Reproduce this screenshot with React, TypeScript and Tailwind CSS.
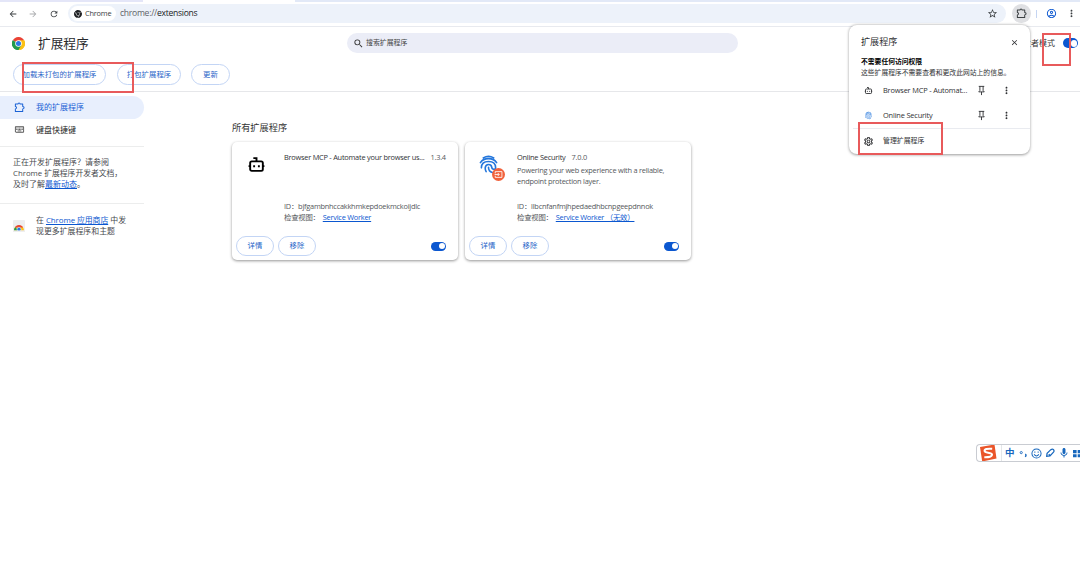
import type { ReactNode } from "react";
import {
  MdArrowBack,
  MdArrowForward,
  MdClose,
  MdFingerprint,
  MdMic,
  MdMoreVert,
  MdOutlineAccountCircle,
  MdOutlineKeyboard,
  MdOutlineSettings,
  MdRefresh,
  MdSearch,
  MdStarBorder,
} from "react-icons/md";
import { SiGooglechrome } from "react-icons/si";

interface Extension {
  name: string;
  version: string;
  description?: string;
  id: string;
  worker: string;
  icon: ReactNode;
}

const BotIcon = ({ className }: { className?: string }) => (
  <svg viewBox="0 0 24 24" fill="none" stroke="currentColor" strokeWidth="2.4" className={className}>
    <path d="M12 8V4H8M2 14h2M20 14h2M15 13v2.6M9 13v2.6" />
    <rect x="4" y="8" width="16" height="12" rx="2" />
  </svg>
);

// body with a tab on top and on the right, notch on the left
const PuzzleIcon = ({ className }: { className?: string }) => (
  <svg viewBox="0 0 24 24" fill="none" stroke="currentColor" strokeWidth="2.2" strokeLinejoin="round" className={className}>
    <path d="M3 4.500h5.500Q9 2 11 2t2.500 2.500H19V10q3 .5 3 2.500T19 15v5.500H3V15q2.500-.5 2.500-2.500T3 10z" />
  </svg>
);

const PinIcon = ({ className }: { className?: string }) => (
  <svg viewBox="0 0 24 24" fill="none" stroke="currentColor" strokeWidth="2" className={className}>
    <path d="M6 3h12M8.5 3v9L6 15h12l-2.5-3V3M12 15v7" />
  </svg>
);

const ChromeLogo = ({ className }: { className?: string }) => (
  <svg viewBox="0 0 48 48" className={className}>
    <path d="M24 24 3.2 12A24 24 0 0 1 44.8 12Z" fill="#ea4335" />
    <path d="M24 24 44.8 12A24 24 0 0 1 24 48Z" fill="#fbc116" />
    <path d="M24 24v24A24 24 0 0 1 3.2 12Z" fill="#229a4c" />
    <path d="M24 12h20.8A24 24 0 0 1 24 48l10.4-18z" fill="#fbc116" />
    <path d="M13.6 30 3.2 12A24 24 0 0 0 24 48l10.4-18z" fill="#229a4c" />
    <circle cx="24" cy="24" r="12" fill="#fff" />
    <circle cx="24" cy="24" r="9.3" fill="#2b77e5" />
  </svg>
);

const StoreIcon = () => (
  <svg viewBox="0 0 12 12" className="h-3 w-3 shrink-0">
    <rect width="12" height="12" rx="1" fill="#eeeeef" />
    <path d="M1 10.500a5 5 0 0 1 10 0z" fill="#fbc116" />
    <path d="M1 10.500a5 5 0 0 1 1.300-3.500L5 10.500z" fill="#229a4c" />
    <path d="M1.700 7.500a5 5 0 0 1 8.600 0z" fill="#ea4335" />
    <circle cx="6" cy="9.300" r="2" fill="#2b77e5" stroke="#fff" strokeWidth=".5" />
    <path d="M0 10.500h12V12H0z" fill="#eeeeef" />
  </svg>
);

const FingerprintIcon = ({ className }: { className?: string }) => (
  <svg viewBox="0 0 20 20" fill="none" stroke="currentColor" strokeWidth="1.7" strokeLinecap="round" className={className}>
    <path d="M4.5 3Q10-.2 15.5 3M1.5 8Q4 3.8 10 3.8T18.5 8M2.5 13.5Q2.5 6.9 10 6.9T17.5 13.5q-.3 2-2.5 1.5-1.6-.5-1.7-2.5Q13 10 10 10T6.5 13.5q0 2.5 1 4M10 13q0 4.5 4 5.5" />
  </svg>
);

const SecurityIcon = () => (
  <div className="relative h-[26px] w-[25px]">
    <FingerprintIcon className="-ml-px h-[19px] w-[19px] text-[#2376dc]" />
    <svg viewBox="0 0 14 14" className="absolute right-0 bottom-0 h-[13px] w-[13px]">
      <circle cx="7" cy="7" r="7" fill="#f1623c" />
      <path d="M3.5 5.8V3.9h7.2v6.2H3.5V8.3M2.8 7h4.7M6.2 5.4 7.8 7 6.2 8.6" fill="none" stroke="#fff" strokeWidth=".9" />
    </svg>
  </div>
);

const extensions: Extension[] = [
  {
    name: "Browser MCP - Automate your browser us...",
    version: "1.3.4",
    id: "bjfgambnhccakkhmkepdoekmckoijdlc",
    worker: "Service Worker",
    icon: <BotIcon className="h-[19px] w-[19px] text-black" />,
  },
  {
    name: "Online Security",
    version: "7.0.0",
    description: "Powering your web experience with a reliable, endpoint protection layer.",
    id: "llbcnfanfmjhpedaedhbcnpgeepdnnok",
    worker: "Service Worker （无效）",
    icon: <SecurityIcon />,
  },
];

function Toggle() {
  return (
    <span className="flex h-[9px] w-[15px] items-center justify-end rounded-full bg-[#0b57d0] pr-[1.5px]">
      <span className="h-1.5 w-1.5 rounded-full bg-white" />
    </span>
  );
}

function PillButton({ children, className }: { children: ReactNode; className: string }) {
  return (
    <button className={`flex shrink-0 items-center justify-center rounded-full border border-[#c3d5f5] whitespace-nowrap text-[#2a66c9] ${className}`}>
      {children}
    </button>
  );
}

function BrowserBar() {
  return (
    <div className="h-[27px] border-b border-[#e8eaef] bg-white">
      <div className="flex h-[2px]">
        <div className="w-[143px] bg-[#e4e6f8]" />
        <div className="w-[152px] bg-white" />
        <div className="flex-1 bg-[#e2e9f7]" />
      </div>
      <div className="flex h-[23px] items-center pl-2 text-[#3c4043]">
        <MdArrowBack className="h-2.5 w-2.5" />
        <MdArrowForward className="ml-2.5 h-2.5 w-2.5 text-[#a9abae]" />
        <MdRefresh className="ml-[11px] h-2.5 w-2.5" />
        <div className="ml-[9px] flex h-[19px] w-[938px] items-center rounded-full bg-[#edf2fa] pl-0.5">
          <div className="flex h-[15px] w-[46px] items-center gap-[3px] rounded-full bg-white pl-1">
            <SiGooglechrome className="h-2 w-2 text-[#202124]" />
            <span className="text-[7.4px] tracking-[-0.2px]">Chrome</span>
          </div>
          <span className="ml-[4px] text-[8.6px] tracking-[-0.28px] text-[#5f6368]">
            chrome://<span className="text-[#202124]">extensions</span>
          </span>
          <MdStarBorder className="mr-[8px] ml-auto h-[11px] w-[11px]" />
        </div>
        <div className="ml-1.5 flex h-[19px] w-[19px] items-center justify-center rounded-full bg-[#dfe0e3]">
          <PuzzleIcon className="h-[11px] w-[11px]" />
        </div>
        <div className="ml-[5px] h-2 w-px bg-[#c5d5f2]" />
        <MdOutlineAccountCircle className="ml-[9px] h-[11px] w-[11px] text-[#0b57d0]" />
        <MdMoreVert className="ml-[9px] h-[11px] w-[11px]" />
      </div>
    </div>
  );
}

function PageHeader() {
  return (
    <header className="h-[65px] border-b border-[#e6e7ea]">
      <div className="flex h-8 items-center">
        <ChromeLogo className="ml-3 h-[13px] w-[13px]" />
        <h1 className="ml-[13px] w-[309px] pt-px text-[12.7px] text-[#28292c]">扩展程序</h1>
        <div className="flex h-5 w-[391px] items-center rounded-full bg-[#ebedf7] pl-[6px]">
          <MdSearch className="h-[11px] w-[11px] text-[#333]" />
          <span className="ml-[2px] text-[6.9px] text-[#444]">搜索扩展程序</span>
        </div>
        <span className="ml-auto text-[8px] text-[#333]">开发者模式</span>
        <span className="mr-0.5 ml-[8px] flex h-2.5 w-[15px] items-center justify-end rounded-full bg-[#0b57d0] pr-[1.5px]">
          <span className="h-[7px] w-[6px] rounded-full bg-white" />
        </span>
      </div>
      <div className="mt-[5px] flex pl-[13px] text-[7.4px]">
        <PillButton className="h-[21px] w-[93px]">加载未打包的扩展程序</PillButton>
        <PillButton className="ml-[11px] h-[21px] w-16">打包扩展程序</PillButton>
        <PillButton className="ml-2.5 h-[21px] w-[39px]">更新</PillButton>
      </div>
    </header>
  );
}

function Sidebar() {
  return (
    <aside className="w-36 shrink-0 pt-1 text-[8px] text-[#474a4e]">
      <div className="flex h-[23px] items-center gap-[11px] rounded-r-full bg-[#e8effd] pb-px pl-3.5 text-[#1a62d5]">
        <PuzzleIcon className="h-[11px] w-[11px]" />
        我的扩展程序
      </div>
      <div className="flex h-[23px] items-center gap-[11px] pb-0.5 pl-3.5 text-[#222]">
        <MdOutlineKeyboard className="h-[11px] w-[11px] text-[#555]" />
        键盘快捷键
      </div>
      <p className="mt-1 h-[57px] border-t border-[#eceded] pt-[10px] pl-[13px] leading-[10.8px] whitespace-nowrap">
        正在开发扩展程序？请参阅
        <br />
        <span className="text-[7.8px]">Chrome 扩展程序开发者文档，</span>
        <br />
        及时了解<a className="text-[#0b57d0] underline">最新动态</a>。
      </p>
      <div className="flex items-center gap-[11px] border-t border-[#eceded] pt-[11px] pl-[13px]">
        <StoreIcon />
        <p className="text-[7.9px] leading-[10.8px] whitespace-nowrap">
          在 <a className="tracking-[-0.08px] text-[#0b57d0] underline">Chrome 应用商店</a> 中发
          <br />
          现更多扩展程序和主题
        </p>
      </div>
    </aside>
  );
}

function ExtensionCard({ ext }: { ext: Extension }) {
  return (
    <article className="flex h-[118px] w-[226px] flex-col rounded-[5px] bg-white text-[7.4px] text-[#55585c] shadow-[0_1px_3px_rgba(0,0,0,0.42)]">
      <div className="flex h-[92px] pt-[10px]">
        <div className="w-[52px] shrink-0 pt-[3px] pl-[15px]">{ext.icon}</div>
        <div className="flex flex-1 flex-col tracking-[-0.24px]">
          <div className="flex h-[11px] items-center whitespace-nowrap text-[#303236]">
            <span>{ext.name}</span>
            <span className="ml-[6px] text-[#55585c]">{ext.version}</span>
          </div>
          <p className="mt-[2px] h-[36px] w-[160px] leading-[11.2px]">{ext.description}</p>
          <div className="leading-[11px] whitespace-nowrap">
            <div>ID：{ext.id}</div>
            <div>
              检查视图：
              <a className="ml-[3px] text-[#0b57d0] underline">{ext.worker}</a>
            </div>
          </div>
        </div>
      </div>
      <div className="flex items-center pt-[2px] pr-3 pl-[4px]">
        <PillButton className="h-5 w-[38px]">详情</PillButton>
        <PillButton className="ml-1 h-5 w-[38px]">移除</PillButton>
        <div className="ml-auto">
          <Toggle />
        </div>
      </div>
    </article>
  );
}

function ExtensionsPopup() {
  return (
    <div className="absolute top-[25px] left-[849px] h-[129px] w-[181px] rounded-lg bg-white text-[7.4px] text-[#303134] shadow-[0_0.5px_3px_rgba(0,0,0,0.4)]">
      <div className="flex h-[30px] items-center justify-between pt-1 pr-[11px] pl-3">
        <span className="text-[9.1px]">扩展程序</span>
        <MdClose className="h-[9px] w-[9px]" />
      </div>
      <div className="pt-px pl-3 leading-[11px] whitespace-nowrap">
        <div className="text-[6.8px] font-bold text-black">不需要任何访问权限</div>
        <div className="text-[6.8px]">这些扩展程序不需要查看和更改此网站上的信息。</div>
      </div>
      <div className="flex h-[25px] items-center pl-[15px]">
        <BotIcon className="h-[9px] w-[9px]" />
        <span className="ml-2.5 w-[93px] tracking-[-0.17px] whitespace-nowrap">Browser MCP - Automat...</span>
        <PinIcon className="h-[11px] w-[11px]" />
        <MdMoreVert className="ml-3.5 h-[11px] w-[11px]" />
      </div>
      <div className="flex h-[25px] items-center pl-[15px]">
        <MdFingerprint className="h-[9px] w-[9px] text-[#2376dc]" />
        <span className="ml-2.5 w-[93px] tracking-[-0.17px]">Online Security</span>
        <PinIcon className="h-[11px] w-[11px]" />
        <MdMoreVert className="ml-3.5 h-[11px] w-[11px]" />
      </div>
      <div className="ml-1 flex h-6 items-center border-t border-[#e9ebf0] pt-0.5 pl-2.5">
        <MdOutlineSettings className="h-[11px] w-[11px]" />
        <span className="ml-[9px] text-[6.9px]">管理扩展程序</span>
      </div>
    </div>
  );
}

function ImeBar() {
  return (
    <div className="absolute top-[444px] left-[976px] flex h-[18px] w-[104px] items-center overflow-hidden rounded-l-sm border border-r-0 border-[#c9ccd2] bg-white text-[#1767bd]">
      <svg viewBox="0 0 18 18" className="ml-[2px] h-[18px] w-[18px] shrink-0">
        <path d="M1 3 15.5.5 17.5 14.5 3.2 17.5z" fill="#ea552a" />
        <path d="M13.2 4.8C8 4.5 5.3 5 5.6 7.2c.3 2 7.2.9 7.4 3.2.2 2.3-3 2.9-7.7 2.8" fill="none" stroke="#fff" strokeWidth="2" />
      </svg>
      <div className="ml-1 h-4 w-px shrink-0 bg-[#e4e6e8]" />
      <span className="ml-[3px] text-[9.5px] leading-none font-bold">中</span>
      <svg viewBox="0 0 10 10" className="ml-1 h-[9px] w-[9px] shrink-0" fill="none" stroke="currentColor">
        <circle cx="2.5" cy="4" r="1.2" />
        <path d="M7 5.8q1.5 1 0 3" strokeWidth="1.6" />
      </svg>
      <svg viewBox="0 0 12 12" className="ml-[3px] h-[11px] w-[11px] shrink-0" fill="none" stroke="currentColor" strokeWidth="1.1">
        <circle cx="6" cy="6" r="5" />
        <path d="M4.2 3.8v1.5M7.8 3.8v1.5M3.4 7q2.6 3.2 5.2 0" />
      </svg>
      <svg viewBox="0 0 12 12" className="ml-[3px] h-2.5 w-2.5 shrink-0" fill="none" stroke="currentColor" strokeWidth="1.5">
        <path d="M2 10 2.5 6.5 7 2q2-1.500 3.2 0t0 3L6 9.5zM4.5 7.5 6 9" />
      </svg>
      <MdMic className="ml-[3px] h-[12px] w-[12px] shrink-0" />
      <svg viewBox="0 0 10 10" className="ml-[3px] h-[9px] w-[9px] shrink-0" fill="currentColor">
        <path d="M0 1h4v3.6H0zM5.2 1H10v3.6H5.2zM0 5.7h4v3.6H0zM5.2 5.7H10v3.6H5.2z" />
      </svg>
    </div>
  );
}

export default function App() {
  return (
    <div className="relative h-[561px] w-[1080px] overflow-hidden bg-white font-['Open_Sans','Noto_Sans_CJK_SC',sans-serif]">
      <BrowserBar />
      <PageHeader />
      <div className="flex">
        <Sidebar />
        <main className="pt-[29px] pl-[88px]">
          <h2 className="h-[21px] text-[9.2px] leading-[14px] text-[#333]">所有扩展程序</h2>
          <div className="flex gap-[7px]">
            {extensions.map((ext) => (
              <ExtensionCard key={ext.id} ext={ext} />
            ))}
          </div>
        </main>
      </div>
      <ExtensionsPopup />
      <ImeBar />

      {/* callout frames */}
      <div className="absolute top-[62px] left-[22px] h-[31px] w-[112px] border-2 border-[#e85a5b]" />
      <div className="absolute top-[33px] left-[1042px] h-[33px] w-[29px] border-2 border-[#e85a5b]" />
      <div className="absolute top-[122px] left-[858px] h-[33px] w-[85px] border-2 border-[#e85a5b]" />
    </div>
  );
}
